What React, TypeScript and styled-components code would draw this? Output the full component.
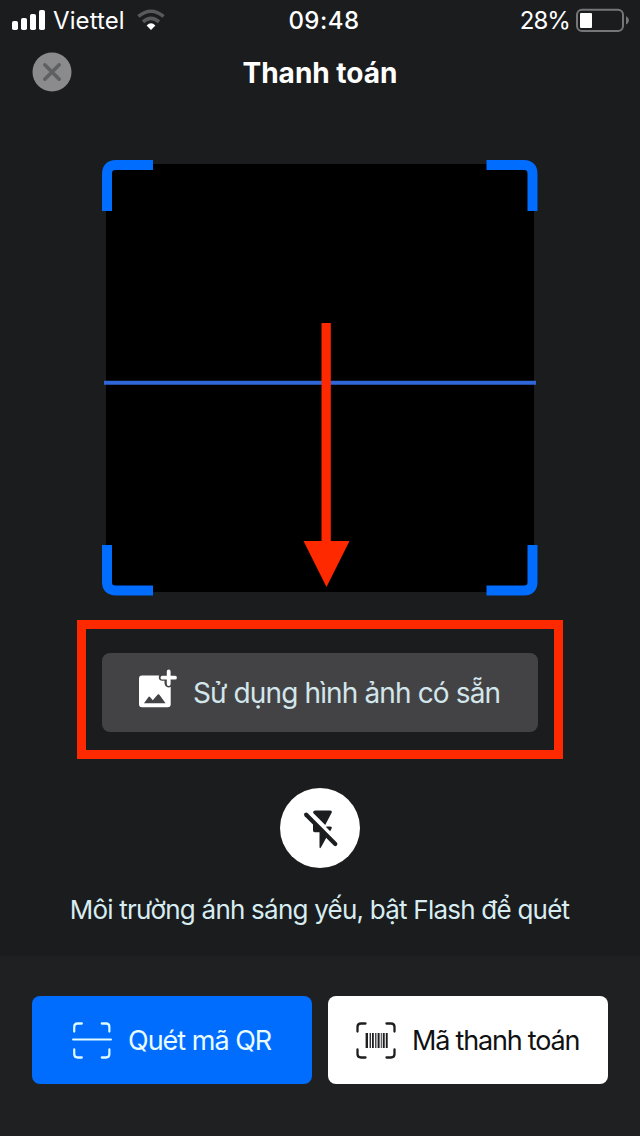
import React from "react";
import styled, { createGlobalStyle } from "styled-components";

const GlobalStyle = createGlobalStyle`
  * { box-sizing: border-box; }
  body { margin: 0; background: #1b1c1e; }
  button { border: 0; padding: 0; font: inherit; cursor: pointer; }
  svg { display: block; flex: none; }
`;

const Screen = styled.div`
  width: 640px;
  height: 1136px;
  display: flex;
  flex-direction: column;
  background: #1b1c1e;
  color: #fff;
  font-family: Inter, "Liberation Sans", sans-serif;
  overflow: hidden;
`;

const StatusBar = styled.header`
  height: 40px;
  flex: none;
  display: grid;
  grid-template-columns: 1fr auto 1fr;
  align-items: center;
  padding: 0 11px 0 12px;
`;

const StatusGroup = styled.div<{ $end?: boolean }>`
  display: flex;
  align-items: center;
  justify-content: ${(p) => (p.$end ? "flex-end" : "flex-start")};
`;

const Label = styled.span<{
  $size: number;
  $weight?: number;
  $spacing?: number;
  $color?: string;
}>`
  font-size: ${(p) => p.$size}px;
  font-weight: ${(p) => p.$weight ?? 400};
  letter-spacing: ${(p) => p.$spacing ?? 0}px;
  color: ${(p) => p.$color ?? "#fff"};
  line-height: 1.2;
  white-space: nowrap;
`;

const Carrier = styled(Label)`
  margin: 0 12px 0 8px;
  padding-top: 2px;
`;

const Clock = styled(Label)`
  padding: 2px 0 0 7px;
`;

const Percent = styled(Label)`
  margin-right: 6px;
  padding-top: 2px;
`;

const TitleBar = styled.div`
  height: 64px;
  flex: none;
  display: grid;
  grid-template-columns: 40px 1fr 40px;
  align-items: center;
  justify-items: center;
  padding: 0 32px;
`;

const Title = styled(Label)`
  padding-top: 3px;
`;

const CloseButton = styled.button`
  width: 40px;
  height: 40px;
  background: none;
`;

const ScanArea = styled.main`
  flex: 1;
  display: flex;
  flex-direction: column;
  align-items: center;
  padding-top: 56px;
`;

const Viewfinder = styled.div`
  position: relative;
  width: 436px;
  height: 436px;
  padding: 4px;
`;

const Camera = styled.div`
  width: 428px;
  height: 428px;
  background: #000;
`;

const Overlay = styled.svg`
  position: absolute;
  inset: 0;
  overflow: visible;
`;

const Highlight = styled.div`
  width: 486px;
  height: 139px;
  margin-top: 24px;
  border: 9px solid #ff2900;
  display: flex;
  justify-content: center;
  padding-top: 24px;
`;

const PickImage = styled.button`
  width: 436px;
  height: 79px;
  border-radius: 8px;
  background: #434345;
  display: flex;
  align-items: center;
  padding: 0 0 0 36px;
  gap: 16px;
`;

const IconSlot = styled.span`
  padding-bottom: 9px;
`;

const ButtonText = styled(Label)`
  padding-top: 2px;
`;

const FlashButton = styled.button`
  width: 80px;
  height: 80px;
  margin-top: 29px;
  border-radius: 50%;
  background: #fff;
`;

const Hint = styled(Label)`
  margin-top: 26px;
  padding-right: 1px;
`;

const Footer = styled.footer`
  height: 180px;
  flex: none;
  display: grid;
  grid-template-columns: 280px 280px;
  align-items: start;
  gap: 16px;
  padding: 40px 32px 0;
  background: #1f2022;
`;

const ActionButton = styled.button<{ $primary?: boolean }>`
  height: 88px;
  border-radius: 8px;
  background: ${(p) => (p.$primary ? "#006dff" : "#fff")};
  display: flex;
  align-items: center;
  gap: 16px;
  padding-left: ${(p) => (p.$primary ? 40 : 28)}px;
`;

const SignalIcon = () => (
  <svg width="33" height="20" viewBox="0 0 33 20" fill="#fff">
    <rect x="0" y="11" width="6" height="9" rx="1.8" />
    <rect x="9" y="8" width="6" height="12" rx="1.8" />
    <rect x="18" y="4" width="6" height="16" rx="1.8" />
    <rect x="27" y="0" width="6" height="20" rx="1.8" />
  </svg>
);

const WifiIcon = () => (
  <svg width="28" height="21" viewBox="0 0 28 21" fill="none">
    <path d="M1.4 7.4Q14-2.9 26.6 7.4" stroke="#59595b" strokeWidth="3.6" />
    <path d="M6 12.8Q14 6 22 12.8" stroke="#59595b" strokeWidth="3.6" />
    <path d="M9.6 16.5Q14 12 18.4 16.5L14 21Z" fill="#fff" />
  </svg>
);

const BatteryIcon = () => (
  <svg width="53" height="24" viewBox="0 0 53 24">
    <rect x="1" y="1.8" width="46" height="21.2" rx="5" fill="none" stroke="#767678" strokeWidth="2" />
    <rect x="4" y="5" width="12" height="15" rx="1" fill="#fff" />
    <path d="M50 8.2C53.8 9.5 53.8 15 50 16.5Z" fill="#767678" />
  </svg>
);

const CloseIcon = () => (
  <svg width="40" height="40" viewBox="0 0 40 40">
    <circle cx="20" cy="20" r="19.5" fill="#8b8b8d" />
    <path d="M12.8 12.8L27.2 27.2M27.2 12.8L12.8 27.2" stroke="#5f6062" strokeWidth="3.6" strokeLinecap="round" />
  </svg>
);

const AddImageIcon = () => (
  <svg width="39" height="39" viewBox="0 0 39 39">
    <path
      fill="#fff"
      d="M4 6.5H21.2Q20.4 8 21 10Q21.8 11.8 24 11.8H26.5V14.5Q26.8 17.6 29.5 18.3Q31.5 18.7 32.7 17.8V35.3Q32.7 38.3 29.7 38.3H4Q1 38.3 1 35.3V9.5Q1 6.5 4 6.5Z"
    />
    <path d="M6 34.2L10.5 28Q11.2 27.2 12 28L14.8 31.2L19.7 25.5Q20.6 24.7 21.4 25.7L27.6 34.2Z" fill="#434345" />
    <path d="M30.7 2.4V15M24.4 8.7H37" stroke="#fff" strokeWidth="3.8" strokeLinecap="round" />
  </svg>
);

const FlashOffIcon = () => (
  <svg width="80" height="80" viewBox="0 0 80 80">
    <path
      fill="#1c1d1f"
      d="M35.3 22.5H50Q52.7 22.5 51.5 25L45.2 37L33.2 25V24Q33.2 22.5 35.3 22.5ZM33 33L47.5 47.5L42 57.5Q39.5 62.5 39.5 58.5V44.3H34.8Q33 44.3 33 42.5ZM46.6 38.4H50Q52.6 38.4 51.5 40.8L50.2 43.2L46 39Z"
    />
    <path d="M26.2 26.8L55.3 55.9" stroke="#1c1d1f" strokeWidth="4.2" strokeLinecap="round" />
  </svg>
);

const ScanCorners = () => (
  <path
    d="M1.5 9.5V5Q1.5 1.5 5 1.5H9.5M30.5 1.5H35Q38.5 1.5 38.5 5V9.5M38.5 27.5V32Q38.5 35.5 35 35.5H30.5M9.5 35.5H5Q1.5 35.5 1.5 32V27.5"
    strokeWidth="2.3"
    strokeLinecap="round"
  />
);

const ScanIcon = () => (
  <svg width="40" height="37" viewBox="0 0 40 37" fill="none" stroke="#e0fbff">
    <g transform="translate(.8 0) scale(.95 1)">
      <ScanCorners />
    </g>
    <path d="M1 17.5H39" strokeWidth="2" strokeLinecap="round" />
  </svg>
);

const bars = [
  [9.6, 2.4], [13.6, 1.3], [16, 1.8], [19.2, 1.2], [21.6, 2], [24.8, 0.9], [26.8, 1.9], [29.8, 1.9],
];

const BarcodeIcon = () => (
  <svg width="40" height="37" viewBox="0 0 40 37" fill="none" stroke="#1e1f21">
    <ScanCorners />
    <g fill="#1e1f21" stroke="none">
      {bars.map(([x, w]) => (
        <rect key={x} x={x} y="11" width={w} height="15" />
      ))}
    </g>
  </svg>
);

export default function App() {
  return (
    <Screen>
      <GlobalStyle />
      <StatusBar>
        <StatusGroup>
          <SignalIcon />
          <Carrier $size={24} $spacing={0.1}>Viettel</Carrier>
          <WifiIcon />
        </StatusGroup>
        <Clock $size={24} $weight={500} $spacing={0.5}>09:48</Clock>
        <StatusGroup $end>
          <Percent $size={24} $spacing={-0.9}>28%</Percent>
          <BatteryIcon />
        </StatusGroup>
      </StatusBar>
      <TitleBar>
        <CloseButton aria-label="Đóng"><CloseIcon /></CloseButton>
        <Title $size={28} $weight={700} $spacing={0}>Thanh toán</Title>
      </TitleBar>
      <ScanArea>
        <Viewfinder>
          <Camera />
          <Overlay width="436" height="436" viewBox="0 0 436 436" fill="none">
            <path
              d="M5 51V14Q5 5 14 5H51M384.5 5H422Q430.5 5 430.5 14V51M430.5 385V422Q430.5 430.5 422 430.5H384.5M51 430.5H14Q5 430.5 5 422V385"
              stroke="#006dff"
              strokeWidth="10"
            />
            <path d="M2 222.8H434" stroke="#2f66d8" strokeWidth="4" />
            <path d="M219.5 163H228.8V381H247.5L224.5 427L201.5 381H219.5Z" fill="#ff2900" />
          </Overlay>
        </Viewfinder>
        <Highlight>
          <PickImage>
            <IconSlot><AddImageIcon /></IconSlot>
            <ButtonText $size={28} $spacing={-0.87} $color="#d3e6eb">Sử dụng hình ảnh có sẵn</ButtonText>
          </PickImage>
        </Highlight>
        <FlashButton aria-label="Bật Flash"><FlashOffIcon /></FlashButton>
        <Hint $size={26} $spacing={-0.77} $color="#d8edf1">
          Môi trường ánh sáng yếu, bật Flash để quét
        </Hint>
      </ScanArea>
      <Footer>
        <ActionButton $primary>
          <ScanIcon />
          <ButtonText $size={27} $spacing={-1} $color="#e8fbff">Quét mã QR</ButtonText>
        </ActionButton>
        <ActionButton>
          <BarcodeIcon />
          <ButtonText $size={27} $spacing={-1.2} $color="#101113">Mã thanh toán</ButtonText>
        </ActionButton>
      </Footer>
    </Screen>
  );
}
